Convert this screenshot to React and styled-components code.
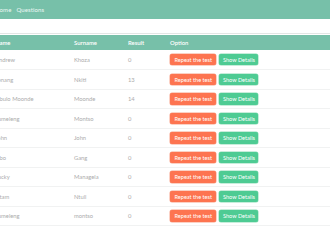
import React from 'react'
import styled, { createGlobalStyle } from 'styled-components'

const GlobalStyle = createGlobalStyle`
  html, body {
    margin: 0;
    padding: 0;
    background: #fff;
    overflow: hidden;
  }
  body {
    font-family: Lato, "Open Sans", "Liberation Sans", sans-serif;
  }
`

const Page = styled.div`
  margin-left: -10px;
  width: calc(100% + 10px);
`

const Navbar = styled.nav`
  height: 19px;
  background: #77c0a9;
  display: flex;
  align-items: center;
  gap: 5px;
  padding-left: 5px;
`

const NavLink = styled.a`
  color: #eef8f4;
  font-size: 6px;
  text-decoration: none;
  letter-spacing: 0.1px;
`

const Spacer = styled.div`
  height: 14px;
  border-bottom: 1px solid #e3e6e5;
`

const Table = styled.table`
  width: 100%;
  border-collapse: collapse;
  table-layout: fixed;
  margin-top: 1px;
`

const HeadRow = styled.tr`
  background: #77c0a9;
  height: 15px;
`

const Th = styled.th`
  width: ${p => p.$w || 'auto'};
  text-align: left;
  color: #fff;
  font-size: 5.9px;
  font-weight: 600;
  padding: 0 0 0 5px;
`

const Row = styled.tr`
  height: 19.5px;
  border-bottom: 1px solid #f1f2f2;
`

const Td = styled.td`
  color: #acacac;
  font-size: 5.8px;
  padding: 0 0 0 5px;
  white-space: nowrap;
  overflow: hidden;
`

const Actions = styled.div`
  display: flex;
  gap: 3px;
  align-items: center;
`

const Button = styled.button`
  height: 11.5px;
  border: none;
  border-radius: 2px;
  padding: 0 ${p => (p.$kind === 'repeat' ? '4.5px' : '3.5px')};
  font-family: inherit;
  font-size: 5.6px;
  color: #fff;
  background: ${p => (p.$kind === 'repeat' ? '#fd7450' : '#4ecb93')};
  box-shadow: 0 0 0 0.5px ${p => (p.$kind === 'repeat' ? '#f7a48c' : '#8fdcb8')};
  cursor: pointer;
  white-space: nowrap;
`

const results = [
  { name: 'Andrew', surname: 'Khoza', result: 0 },
  { name: 'Lenang', surname: 'Nkiti', result: 13 },
  { name: 'Sibulo Moonde', surname: 'Moonde', result: 14 },
  { name: 'Tumeleng', surname: 'Montso', result: 0 },
  { name: 'John', surname: 'John', result: 0 },
  { name: 'Sibo', surname: 'Gang', result: 0 },
  { name: 'Lucky', surname: 'Managela', result: 0 },
  { name: 'Sitam', surname: 'Ntuli', result: 0 },
  { name: 'Tumeleng', surname: 'montso', result: 0 },
]

const App = () => (
  <>
    <GlobalStyle />
    <Page>
      <Navbar>
        <NavLink href="#">Home</NavLink>
        <NavLink href="#">Questions</NavLink>
      </Navbar>
      <Spacer />
      <Table>
        <thead>
          <HeadRow>
            <Th $w="74px">Name</Th>
            <Th $w="49px">Surname</Th>
            <Th $w="37px">Result</Th>
            <Th>Option</Th>
          </HeadRow>
        </thead>
        <tbody>
          {results.map((r, i) => (
            <Row key={i}>
              <Td>{r.name}</Td>
              <Td>{r.surname}</Td>
              <Td>{r.result}</Td>
              <Td>
                <Actions>
                  <Button $kind="repeat">Repeat the test</Button>
                  <Button $kind="details">Show Details</Button>
                </Actions>
              </Td>
            </Row>
          ))}
        </tbody>
      </Table>
    </Page>
  </>
)

export default App
